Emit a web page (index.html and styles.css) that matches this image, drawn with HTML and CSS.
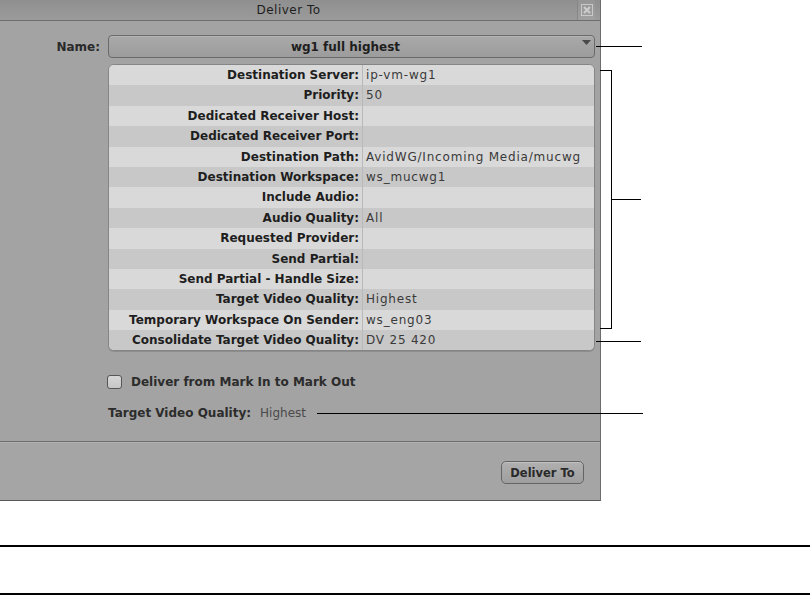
FILE: index.html
```html
<!DOCTYPE html>
<html lang="en">
<head>
    <meta charset="UTF-8">
    <title>Deliver To</title>
    <link rel="stylesheet" href="styles.css">
</head>
<body>
    <div class="page">
        <div class="dialog">
            <div class="titlebar">
                <div class="title">Deliver To</div>
                <div class="close">
                    <svg width="12" height="12" viewBox="0 0 12 12">
                        <rect x="0.5" y="0.5" width="11" height="11" fill="none" stroke="#c9c9c9"/>
                        <path d="M3 3 L9 9 M9 3 L3 9" stroke="#cdcdcd" stroke-width="2"/>
                    </svg>
                </div>
            </div>

            <div class="content">
                <div class="name-row">
                    <div class="name-label">Name:</div>
                    <div class="select">
                        <span>wg1 full highest</span>
                        <svg class="arrow" width="9" height="5" viewBox="0 0 9 5">
                            <polygon points="0,0 9,0 4.5,5" fill="#4a4a4a"/>
                        </svg>
                    </div>
                </div>

                <div class="props">
                    <div class="row"><div class="key">Destination Server:</div><div class="val">ip-vm-wg1</div></div>
                    <div class="row"><div class="key">Priority:</div><div class="val">50</div></div>
                    <div class="row"><div class="key">Dedicated Receiver Host:</div><div class="val"></div></div>
                    <div class="row"><div class="key">Dedicated Receiver Port:</div><div class="val"></div></div>
                    <div class="row"><div class="key">Destination Path:</div><div class="val">AvidWG/Incoming Media/mucwg</div></div>
                    <div class="row"><div class="key">Destination Workspace:</div><div class="val">ws_mucwg1</div></div>
                    <div class="row"><div class="key">Include Audio:</div><div class="val"></div></div>
                    <div class="row"><div class="key">Audio Quality:</div><div class="val">All</div></div>
                    <div class="row"><div class="key">Requested Provider:</div><div class="val"></div></div>
                    <div class="row"><div class="key">Send Partial:</div><div class="val"></div></div>
                    <div class="row"><div class="key">Send Partial - Handle Size:</div><div class="val"></div></div>
                    <div class="row"><div class="key">Target Video Quality:</div><div class="val">Highest</div></div>
                    <div class="row"><div class="key">Temporary Workspace On Sender:</div><div class="val">ws_eng03</div></div>
                    <div class="row"><div class="key">Consolidate Target Video Quality:</div><div class="val">DV 25 420</div></div>
                </div>

                <label class="option">
                    <span class="check"></span>
                    Deliver from Mark In to Mark Out
                </label>

                <div class="quality">
                    <span class="quality-label">Target Video Quality:</span>
                    <span class="quality-value">Highest</span>
                </div>
            </div>

            <div class="footer">
                <button class="btn">Deliver To</button>
            </div>
        </div>

        <!-- callout lines -->
        <div class="callout name-line"></div>
        <div class="bracket"></div>
        <div class="callout bracket-line"></div>
        <div class="callout consolidate-line"></div>
        <div class="callout quality-line"></div>

        <div class="rule first"></div>
        <div class="rule"></div>
    </div>
</body>
</html>
```

FILE: styles.css
```css
* {
    margin: 0;
    padding: 0;
    box-sizing: border-box;
}

body {
    background: #fff;
    font-family: 'DejaVu Sans', Verdana, sans-serif;
    color: #222;
}

.page {
    position: relative;
    width: 810px;
    height: 595px;
}

.dialog {
    width: 601px;
    height: 501px;
    display: flex;
    flex-direction: column;
    background: #a3a3a3;
    border-right: 1px solid #6c6c6c;
    border-bottom: 1px solid #595959;
}

.titlebar {
    height: 21px;
    display: flex;
    background: linear-gradient(#8f8f8f, #9b9b9b);
    border-bottom: 1px solid #6e6e6e;
}

.title {
    flex: 1;
    text-align: center;
    font-size: 12px;
    letter-spacing: 0.5px;
    line-height: 20px;
    color: #1e1e1e;
}

.close {
    width: 18px;
    margin-right: 5px;
    border-left: 1px solid #868686;
    display: flex;
    align-items: center;
    justify-content: center;
    background: linear-gradient(#959595, #a0a0a0);
}

.content {
    flex: 1;
    padding: 14px 5px 0 0;
}

.name-row {
    display: flex;
    align-items: center;
    gap: 8px;
    height: 23px;
}

.name-label {
    width: 100px;
    text-align: right;
    font-size: 12px;
    font-weight: bold;
    color: #2a2a2a;
}

.select {
    flex: 1;
    height: 23px;
    position: relative;
    display: flex;
    align-items: center;
    justify-content: center;
    padding-right: 12px;
    border: 1px solid #6a6a6a;
    border-radius: 4px;
    background: linear-gradient(#a9a9a9, #9c9c9c);
    box-shadow: inset 0 1px 0 #b4b4b4;
    font-size: 12px;
    font-weight: bold;
    color: #1e1e1e;
}

.arrow {
    position: absolute;
    right: 3px;
    top: 4px;
}

.props {
    margin: 6px 0 0 108px;
    border: 1px solid #858585;
    border-radius: 6px;
    overflow: hidden;
    background: #d9d9d9;
    box-shadow: 0 1px 0 #8d8d8d;
}

.row {
    display: flex;
    height: 20.4px;
    align-items: stretch;
    background: #d9d9d9;
}

.row:nth-child(even) {
    background: #c8c8c8;
}

.key {
    width: 253px;
    padding-right: 3px;
    text-align: right;
    font-size: 12px;
    font-weight: bold;
    line-height: 20px;
    color: #1e1e1e;
}

.val {
    flex: 1;
    padding-left: 3px;
    border-left: 1px solid #b9b9b9;
    font-size: 12px;
    letter-spacing: 0.8px;
    line-height: 20px;
    color: #3a3a3a;
}

.option {
    display: flex;
    align-items: center;
    gap: 9px;
    margin: 24px 0 0 107px;
    height: 14px;
    font-size: 12px;
    font-weight: bold;
    color: #2c2c2c;
}

.check {
    width: 15px;
    height: 14px;
    border: 1px solid #565656;
    border-radius: 3px;
    background: linear-gradient(#d6d6d6, #c6c6c6);
}

.quality {
    margin: 16px 0 0 108px;
    height: 15px;
    display: flex;
    align-items: center;
    gap: 9px;
    font-size: 12px;
}

.quality-label {
    font-weight: bold;
    color: #2c2c2c;
}

.quality-value {
    color: #4a4a4a;
}

.footer {
    height: 59px;
    border-top: 1px solid #6e6e6e;
    box-shadow: inset 0 1px 0 #b1b1b1;
    background: #a5a5a5;
    display: flex;
    justify-content: flex-end;
    align-items: flex-start;
    padding: 19px 16px 0 0;
}

.btn {
    height: 23px;
    width: 83px;
    border: 1px solid #646464;
    border-radius: 5px;
    background: linear-gradient(#b0b0b0, #9e9e9e);
    box-shadow: inset 0 1px 0 #c0c0c0;
    font-family: 'DejaVu Sans', Verdana, sans-serif;
    font-size: 11.5px;
    font-weight: bold;
    color: #2a2a2a;
}

/* annotation lines drawn over the screenshot */
.callout {
    position: absolute;
    height: 1px;
    background: #000;
}

.name-line {
    top: 46px;
    left: 596px;
    width: 46px;
}

.bracket {
    position: absolute;
    top: 70px;
    left: 600px;
    width: 12px;
    height: 259px;
    border: 1px solid #000;
    border-left: none;
}

.bracket-line {
    top: 199px;
    left: 611px;
    width: 30px;
}

.consolidate-line {
    top: 341px;
    left: 596px;
    width: 45px;
}

.quality-line {
    top: 413px;
    left: 317px;
    width: 326px;
}

.rule {
    height: 2px;
    width: 810px;
    background: #000;
    margin-top: 46px;
}

.rule.first {
    margin-top: 44px;
}
```
